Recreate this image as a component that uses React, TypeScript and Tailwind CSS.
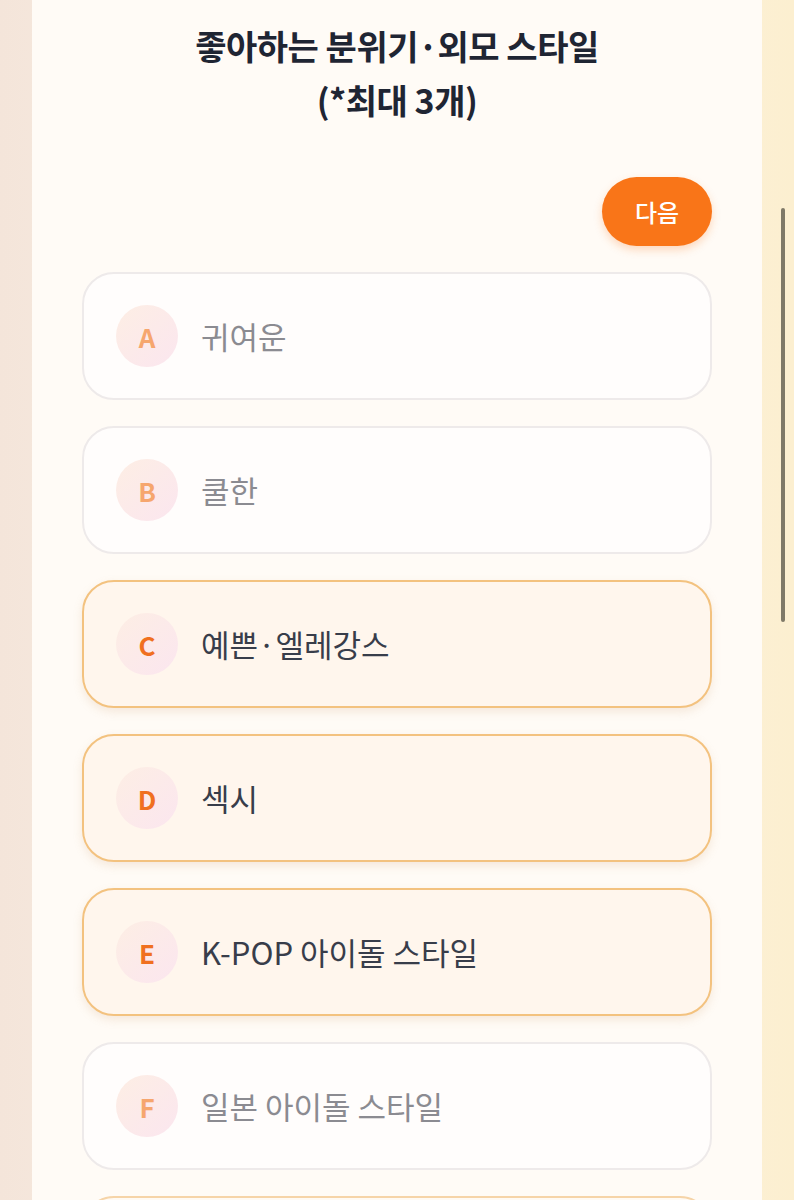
const options = [
  { key: "A", label: "귀여운", selected: false },
  { key: "B", label: "쿨한", selected: false },
  { key: "C", label: "예쁜·엘레강스", selected: true },
  { key: "D", label: "섹시", selected: true },
  { key: "E", label: "K-POP 아이돌 스타일", selected: true },
  { key: "F", label: "일본 아이돌 스타일", selected: false },
];

function OptionCard({ item }: { item: (typeof options)[number] }) {
  return (
    <div
      className={
        item.selected
          ? "flex h-[128px] shrink-0 items-center rounded-[32px] border-2 border-[#f3c27f] bg-[#fff6ed] pl-[32px] shadow-[0_4px_10px_rgba(200,150,100,0.18)]"
          : "flex h-[128px] shrink-0 items-center rounded-[32px] border-2 border-[#eeeaea] bg-[#fffdfc] pl-[32px]"
      }
    >
      <div className="flex h-[62px] w-[62px] items-center justify-center rounded-full bg-gradient-to-br from-[#fdeee4] to-[#fbe6ef]">
        <span
          className={
            item.selected
              ? "text-[26px] font-semibold text-[#f07020]"
              : "text-[26px] font-semibold text-[#f6a66e]"
          }
        >
          {item.key}
        </span>
      </div>
      <span
        className={
          item.selected
            ? "ml-[23px] text-[31px] text-[#383d4a]"
            : "ml-[23px] text-[31px] text-[#8b8b91]"
        }
      >
        {item.label}
      </span>
    </div>
  );
}

export default function App() {
  return (
    <div
      className="flex h-[1200px] w-[794px] overflow-hidden bg-gradient-to-r from-[#f4e5da] via-[#fbf3e8] to-[#fcefd0]"
      style={{ fontFamily: '"Noto Sans CJK KR", "Noto Sans", sans-serif' }}
    >
      <div className="ml-[32px] flex w-[730px] flex-col bg-[#fffbf6] px-[50px] pt-[19px]">
        <h1 className="text-center text-[34px] font-bold leading-[54px] tracking-[-0.5px] text-[#1f2533]">
          좋아하는 분위기·외모 스타일
          <br />
          (*최대 3개)
        </h1>
        <div className="mt-[50px] flex justify-end">
          <button className="h-[69px] w-[110px] rounded-full bg-[#f97518] text-[24px] font-medium text-white shadow-[0_4px_8px_rgba(249,117,24,0.25)]">
            다음
          </button>
        </div>
        <div className="mt-[26px] flex flex-col gap-[26px]">
          {options.map((o) => (
            <OptionCard key={o.key} item={o} />
          ))}
          <div className="h-[128px] shrink-0 rounded-[32px] border-2 border-[#f6d4a8] bg-[#fffaf4]" />
        </div>
      </div>
      <div className="flex w-[32px] justify-center">
        <div className="ml-[10px] mt-[208px] h-[414px] w-[4px] rounded-full bg-[#7f7967]" />
      </div>
    </div>
  );
}
